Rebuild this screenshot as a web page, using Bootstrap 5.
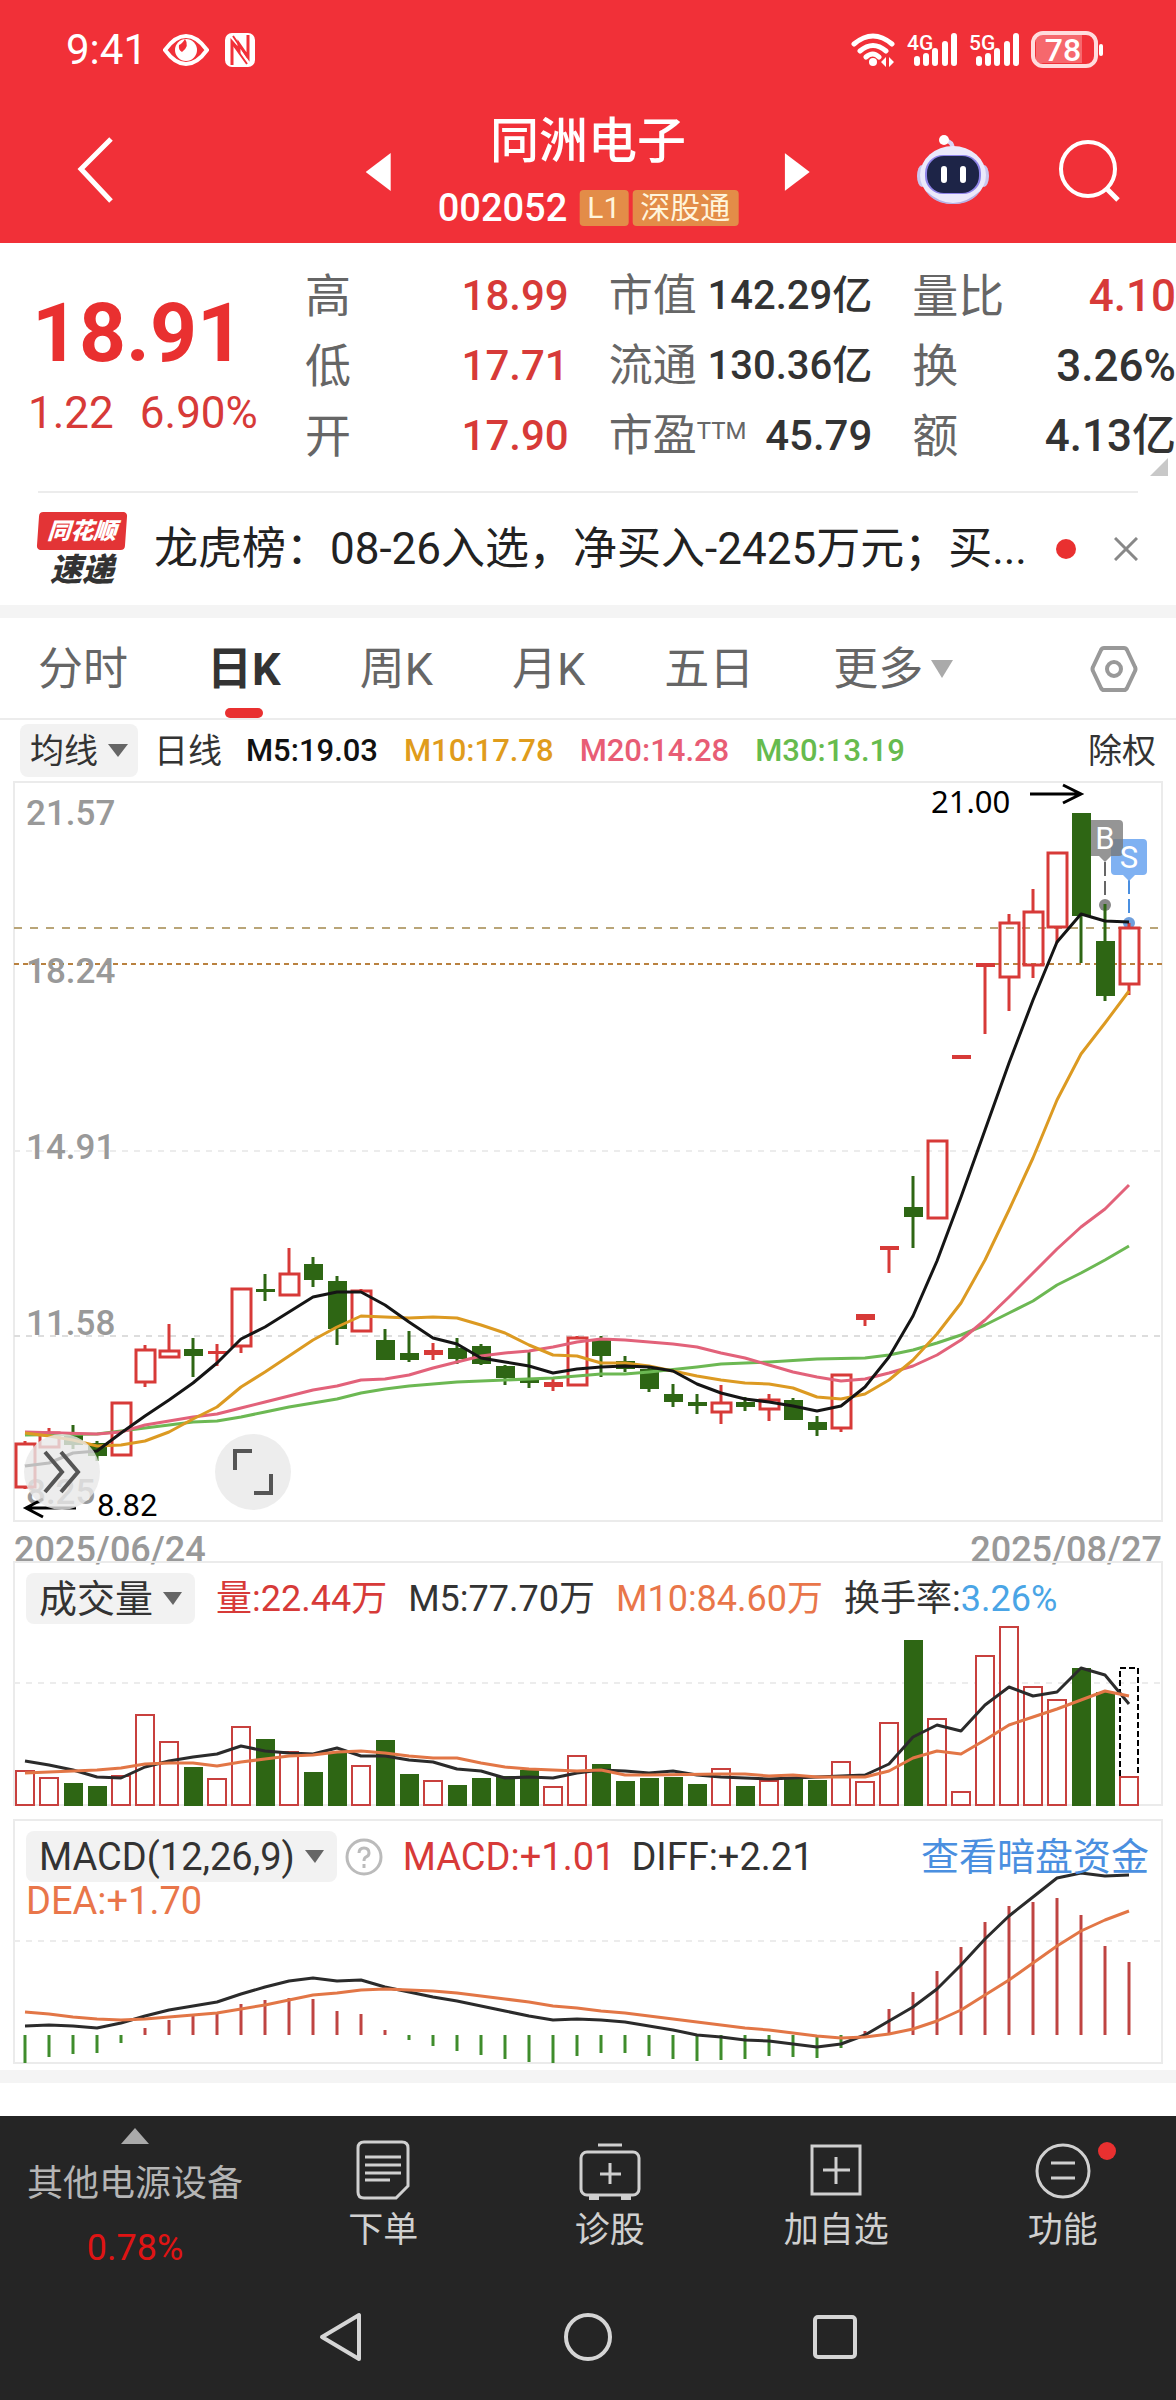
<!DOCTYPE html>
<html lang="zh-CN">
<head>
<meta charset="utf-8">
<meta name="viewport" content="width=device-width, initial-scale=1">
<title>同洲电子 002052</title>
<link rel="stylesheet" href="https://cdn.jsdelivr.net/npm/bootstrap@5.3.0/dist/css/bootstrap.min.css">
<style>
:root{--up:#d73a38;--ink:#333;--soft:#666;--axis:#999;--edge:#ebebeb}
body{font-family:Roboto,"Noto Sans CJK SC",sans-serif;color:var(--ink);background:#fff;font-size:44px;line-height:1}
button,a{font:inherit;line-height:inherit;color:inherit;text-decoration:none}
button{border:0;background:none;padding:0}
svg{display:block;flex:none}
.c-up{color:var(--up)}.c-dark{color:#222}
.topbar{background:#f13038;color:#fff}
.status{height:100px;padding:0 72px 0 66px}
.clock{font-size:42px}
.titlebar{height:143px;padding:0 56px 4px 76px}
.name-pad{padding:0 46px}
.title{font-size:49px;font-weight:500;height:72px;padding-bottom:22px}
.code{font-size:38px;font-weight:500}
.tag{background:#e38c48;border-radius:4px;font-size:30px;height:36px;padding:0 8px;color:#fff5dc}
.quote{height:248px}
.price-pane{width:305px;padding:46px 0 0 28px}
.price{font-size:82px;font-weight:700;line-height:88px;color:#e93030;padding-left:4px}
.delta{font-size:44px;line-height:60px;padding-top:6px;gap:26px}
.stats{gap:40px;padding-top:18px}
.stat{height:70px}
.stat .k{color:var(--soft)}
.wide-k .k{font-size:46px}
.stat .v{font-weight:500;font-size:42px}
.stat .v.cn{font-size:40px}
.wide-v .stat .v{font-size:44px}
.ttm{font-size:24px;align-self:flex-start;padding-top:18px;color:var(--soft)}
.corner{right:8px;bottom:15px}
.rule{border-top:2px solid #ececec;margin:0 38px}
.news{height:112px;padding:0 38px;gap:28px}
.news-end{gap:38px}
.logo-box{background:#e33436;border-radius:4px;transform:skewX(-4deg);width:88px;height:38px;color:#fff;font-size:23px;font-weight:900;font-style:italic}
.logo-sub{font-size:32px;font-weight:900;font-style:italic;height:32px}
.band{height:13px;background:#f4f4f4}
.tabs{height:102px;padding:2px 38px 0;gap:79px;color:var(--soft);border-bottom:2px solid #ececec;font-size:45px}
.tabs a.on{color:var(--ink);font-weight:700}
.tabs a{height:100%}
.tabs .on::after{content:"";position:absolute;bottom:0;left:50%;margin-left:-19px;width:38px;height:10px;border-radius:5px;background:#e93030}
.ma{height:61px;padding:0 20px;font-size:34px}
.pick{background:#f2f2f2;border-radius:8px;color:var(--ink)}
.ma .pick{height:53px;padding:0 10px;gap:10px}
.ma .avg{font-size:31px;font-weight:500;margin-right:26px}
.chart-wrap svg.plot,.sub svg.plot{width:100%;height:auto;overflow:visible}
.round{width:76px;height:76px;border-radius:50%;background:rgba(232,232,232,.8);bottom:12px}
.r1{left:24px}.r2{left:215px}
.dates{height:39px;padding:0 14px;color:var(--axis);font-size:36px;font-weight:500;line-height:56px}
.sub .legend-row{left:26px;right:27px;top:12px;font-size:38px}
.sub .pick{height:51px;padding:0 13px;gap:10px}
.legend-row.vol-row{font-size:36px;gap:21px}
.vol-row .pick{font-size:38px}
.gap-strip{height:33px}
.dock{background:#252525;color:#d0d0d0;font-size:35px}
.dock-main{height:158px}
.dock-main .sector{width:270px;color:#b5b5b5;font-size:36px}
.sector .nm{padding-top:22px}
.dock-main .act{padding-top:24px;gap:13px}
.sysnav{height:126px;gap:200px}
</style>
</head>
<body>
<header class="topbar">
  <div class="status d-flex align-items-center justify-content-between">
    <div class="d-flex align-items-center gap-3">
      <span class="clock">9:41</span>
      <svg width="46" height="34" viewBox="0 0 46 34"><path d="M2 17Q12 3 23 3T44 17Q34 31 23 31T2 17Z" fill="none" stroke="#fff" stroke-width="4"/><circle cx="23" cy="17" r="11" fill="#fff"/><path d="M22 6q5 7-3 13-4-2-3-7 3-1 6-6" fill="#f13038"/></svg>
      <svg width="30" height="34" viewBox="0 0 30 34"><rect width="30" height="34" rx="7" fill="#fff"/><path d="M7 32V9l7 8v-6l9 13V2" fill="none" stroke="#f13038" stroke-width="3"/><path d="M8 3l15 22M7 10l15 21" stroke="#f13038" stroke-width="2"/></svg>
    </div>
    <svg width="254" height="40" viewBox="851 30 254 40" font-family="Roboto,sans-serif" fill="#fff">
      <g fill="none" stroke="#fff" stroke-width="5" stroke-linecap="round"><path d="M855 44q19-16 38 0M861 51q13-11 26 0M867 57q7-6 13 0"/></g>
      <circle cx="874" cy="62" r="4"/><path d="M882 62l5-5v10zM895 62l-5-5v10z"/>
      <text x="908" y="50" font-size="21" font-weight="500">4G</text>
      <text x="970" y="50" font-size="21" font-weight="500">5G</text>
      <g stroke="#fff" stroke-width="6" stroke-linecap="round"><path d="M918 59v4M927 56v7M936 51v12M946 44v19M955 36v27M980 59v4M989 56v7M998 51v12M1008 44v19M1017 36v27"/></g>
      <path d="M1037 35h46v28h-46z" fill="#f6686d"/>
      <rect x="1034" y="33" width="63" height="33" rx="10" fill="none" stroke="#ffdcdd" stroke-width="4"/><path d="M1102 46v8" stroke="#fff" stroke-width="4" stroke-linecap="round"/>
      <text x="1064" y="61" font-size="32" font-weight="500" text-anchor="middle">78</text>
    </svg>
  </div>
  <div class="titlebar position-relative d-flex justify-content-between align-items-center">
    <a href="#" aria-label="返回"><svg width="40" height="68" viewBox="0 0 40 68"><path d="M35 3L5 33l30 32" fill="none" stroke="#fff" stroke-width="5"/></svg></a>
    <div class="position-absolute top-0 start-50 translate-middle-x h-100 d-flex align-items-center">
      <button aria-label="上一只"><svg width="26" height="38" viewBox="0 0 26 38"><path d="M0 19L25 0v38z" fill="#fff"/></svg></button>
      <div class="name-pad d-flex flex-column align-items-center text-nowrap">
        <div class="title d-flex align-items-center">同洲电子</div>
        <div class="d-flex align-items-center gap-1">
          <span class="code me-2">002052</span><span class="tag d-flex align-items-center">L1</span><span class="tag d-flex align-items-center">深股通</span>
        </div>
      </div>
      <button aria-label="下一只"><svg width="26" height="38" viewBox="0 0 26 38"><path d="M25 19L0 0v38z" fill="#fff"/></svg></button>
    </div>
    <div class="d-flex align-items-center gap-5">
      <button class="me-3 pe-1" aria-label="助手"><svg width="74" height="72" viewBox="0 0 74 72"><path d="M37 16q0-9-9-10" fill="none" stroke="#d9d3f5" stroke-width="4"/><circle cx="28" cy="6" r="5" fill="#fff"/><ellipse cx="6" cy="42" rx="5" ry="11" fill="#c9c6ee"/><ellipse cx="68" cy="42" rx="5" ry="11" fill="#c9c6ee"/><ellipse cx="37" cy="41" rx="33" ry="29" fill="#ebe9fb"/><path d="M10 57q27 24 54 0-8 13-27 13T10 57" fill="#b6b2e6"/><rect x="9" y="21" width="56" height="39" rx="18" fill="#8f84e8"/><rect x="11" y="22" width="52" height="37" rx="17" fill="#1d2447"/><path d="M28 35v11M47 35v11" stroke="#fff" stroke-width="6" stroke-linecap="round"/></svg></button>
      <button aria-label="搜索"><svg width="62" height="64" viewBox="0 0 62 64"><circle cx="30" cy="31" r="27" fill="none" stroke="#fff" stroke-width="4"/><path d="M48 50l12 12" stroke="#fff" stroke-width="5"/></svg></button>
    </div>
  </div>
</header>

<section class="quote d-flex position-relative">
  <div class="price-pane flex-shrink-0">
    <div class="price">18.91</div>
    <div class="delta c-up d-flex"><span>1.22</span><span>6.90%</span></div>
  </div>
  <div class="stats d-flex flex-grow-1 text-nowrap">
    <div class="flex-fill w-100 wide-k">
      <div class="stat d-flex align-items-center justify-content-between"><span class="k">高</span><span class="v c-up">18.99</span></div>
      <div class="stat d-flex align-items-center justify-content-between"><span class="k">低</span><span class="v c-up">17.71</span></div>
      <div class="stat d-flex align-items-center justify-content-between"><span class="k">开</span><span class="v c-up">17.90</span></div>
    </div>
    <div class="flex-fill w-100">
      <div class="stat d-flex align-items-center justify-content-between"><span class="k">市值</span><span class="v cn">142.29亿</span></div>
      <div class="stat d-flex align-items-center justify-content-between"><span class="k">流通</span><span class="v cn">130.36亿</span></div>
      <div class="stat d-flex align-items-center"><span class="k">市盈</span><span class="ttm">TTM</span><span class="v ms-auto">45.79</span></div>
    </div>
    <div class="flex-fill w-100 wide-k wide-v">
      <div class="stat d-flex align-items-center justify-content-between"><span class="k">量比</span><span class="v c-up">4.10</span></div>
      <div class="stat d-flex align-items-center justify-content-between"><span class="k">换</span><span class="v">3.26%</span></div>
      <div class="stat d-flex align-items-center justify-content-between"><span class="k">额</span><span class="v">4.13亿</span></div>
    </div>
  </div>
  <svg class="corner position-absolute" width="18" height="18"><path d="M18 0v18H0z" fill="#c8c8c8"/></svg>
</section>
<div class="rule"></div>
<section class="news d-flex align-items-center">
  <div class="flex-shrink-0 d-flex flex-column align-items-center gap-1">
    <span class="logo-box d-flex align-items-center justify-content-center">同花顺</span>
    <span class="logo-sub">速递</span>
  </div>
  <a href="#" class="text-nowrap c-dark">龙虎榜：08-26入选，净买入-2425万元；买...</a>
  <div class="news-end ms-auto d-flex align-items-center">
    <svg width="20" height="20"><circle cx="10" cy="10" r="10" fill="#e93030"/></svg>
    <button aria-label="关闭"><svg width="24" height="24" viewBox="0 0 24 24"><path d="M1 1l22 22M23 1L1 23" stroke="#888" stroke-width="3"/></svg></button>
  </div>
</section>
<div class="band"></div>

<nav class="tabs d-flex align-items-center text-nowrap">
  <a href="#" class="d-flex align-items-center">分时</a>
  <a href="#" class="on position-relative d-flex align-items-center">日K</a>
  <a href="#" class="d-flex align-items-center">周K</a>
  <a href="#" class="d-flex align-items-center">月K</a>
  <a href="#" class="d-flex align-items-center">五日</a>
  <a href="#" class="d-flex align-items-center gap-2">更多<svg width="22" height="18"><path d="M0 0h22L11 18z" fill="#aaa"/></svg></a>
  <button class="ms-auto" aria-label="设置"><svg width="48" height="48" viewBox="0 0 48 48" fill="none" stroke="#999" stroke-width="4"><path d="M14 3h20q2 0 3 2l8 17q1 2 0 4l-8 17q-1 2-3 2H14q-2 0-3-2L3 26q-1-2 0-4l8-17q1-2 3-2z"/><circle cx="24" cy="24" r="7"/></svg></button>
</nav>

<div class="ma d-flex align-items-center text-nowrap">
  <button class="pick d-flex align-items-center">均线<svg width="20" height="13"><path d="M0 0h20L10 13z" fill="#666"/></svg></button>
  <span class="ms-3 me-4">日线</span>
  <span class="avg" style="color:#111">M5:19.03</span>
  <span class="avg" style="color:#e09c1c">M10:17.78</span>
  <span class="avg" style="color:#e85d75">M20:14.28</span>
  <span class="avg" style="color:#66bb4e">M30:13.19</span>
  <span class="ms-auto">除权</span>
</div>

<section class="chart-wrap position-relative">
  <svg class="plot" id="kline" viewBox="0 781 1176 741" font-family="Roboto,sans-serif"></svg>
  <button class="round r1 position-absolute d-flex align-items-center justify-content-center" aria-label="展开"><svg width="38" height="44" viewBox="0 0 38 44"><path d="M2 2l17 20L2 42M18 2l17 20-17 20" fill="none" stroke="#555" stroke-width="4"/></svg></button>
  <button class="round r2 position-absolute d-flex align-items-center justify-content-center" aria-label="全屏"><svg width="40" height="46" viewBox="0 0 40 46"><path d="M2 21V2h17M21 44h17V25" fill="none" stroke="#555" stroke-width="4"/></svg></button>
</section>
<div class="dates d-flex justify-content-between"><span>2025/06/24</span><span>2025/08/27</span></div>

<section class="sub position-relative">
  <svg class="plot" id="vol" viewBox="0 1561 1176 258"></svg>
  <div class="legend-row vol-row position-absolute d-flex align-items-center text-nowrap">
    <button class="pick d-flex align-items-center">成交量<svg width="19" height="13"><path d="M0 0h19L10 13z" fill="#666"/></svg></button>
    <span class="c-up">量:22.44万</span>
    <span>M5:77.70万</span>
    <span style="color:#e9764a">M10:84.60万</span>
    <span>换手率:<span style="color:#4aa5e6">3.26%</span></span>
  </div>
</section>
<section class="sub position-relative">
  <svg class="plot" id="macd" viewBox="0 1819 1176 251"></svg>
  <div class="legend-row position-absolute">
    <div class="d-flex align-items-center text-nowrap">
      <button class="pick d-flex align-items-center">MACD(12,26,9)<svg width="19" height="13"><path d="M0 0h19L10 13z" fill="#666"/></svg></button>
      <svg class="ms-2" width="38" height="38" viewBox="0 0 38 38" fill="none" stroke="#bbb" stroke-width="3"><circle cx="19" cy="19" r="17"/><path d="M14 15q0-5 5-5t5 5q0 3-3 4-2 1-2 4M19 26v4"/></svg>
      <span class="c-up mx-3 ps-1">MACD:+1.01</span>
      <span>DIFF:+2.21</span>
      <a href="#" class="ms-auto" style="color:#4a8fe0">查看暗盘资金</a>
    </div>
    <div style="color:#e9764a">DEA:+1.70</div>
  </div>
</section>
<div class="band"></div>
<div class="gap-strip"></div>

<footer class="dock">
  <div class="dock-main d-flex">
    <a href="#" class="sector flex-shrink-0 d-flex flex-column align-items-center pt-2">
      <svg class="mt-1" width="28" height="16"><path d="M14 0l14 16H0z" fill="#aaa"/></svg>
      <span class="nm">其他电源设备</span><span class="pt-4 mt-1" style="color:#df1414">0.78%</span>
    </a>
    <a href="#" class="act flex-fill w-100 d-flex flex-column align-items-center"><svg width="54" height="60" viewBox="0 0 54 60" fill="none" stroke="#d0d0d0" stroke-width="3"><path d="M8 2h38q6 0 6 6v38L40 58H8q-6 0-6-6V8q0-6 6-6z"/><path d="M9 17h36M9 25h36M9 33h36M9 40h25"/></svg><span>下单</span></a>
    <a href="#" class="act flex-fill w-100 d-flex flex-column align-items-center"><svg width="62" height="60" viewBox="0 0 62 60" fill="none" stroke="#d0d0d0" stroke-width="3"><rect x="2" y="12" width="58" height="43" rx="6"/><path d="M19 5h24M31 23v21M21 34h21"/><path d="M10 58h10M42 58h10" stroke-width="4"/></svg><span>诊股</span></a>
    <a href="#" class="act flex-fill w-100 d-flex flex-column align-items-center"><svg width="54" height="60" viewBox="0 0 54 60" fill="none" stroke="#d0d0d0" stroke-width="3"><path d="M3 6h48v48H3zM27 17v27M14 30h27"/></svg><span>加自选</span></a>
    <a href="#" class="act flex-fill w-100 d-flex flex-column align-items-center"><svg width="108" height="60" viewBox="0 0 108 60" fill="none" stroke="#d0d0d0" stroke-width="3"><circle cx="54" cy="31" r="26"/><path d="M42 23h24M42 38h24"/><circle cx="98" cy="11" r="9" fill="#e93030" stroke="none"/></svg><span>功能</span></a>
  </div>
  <div class="sysnav d-flex align-items-center justify-content-center">
    <button aria-label="后退"><svg width="44" height="50" viewBox="0 0 44 50"><path d="M40 3v44L3 25z" fill="none" stroke="#d5d5d5" stroke-width="4" stroke-linejoin="round"/></svg></button>
    <button aria-label="主页"><svg width="50" height="50"><circle cx="25" cy="25" r="22" fill="none" stroke="#d5d5d5" stroke-width="4"/></svg></button>
    <button aria-label="最近任务"><svg width="44" height="46"><rect x="2" y="3" width="40" height="40" rx="3" fill="none" stroke="#d5d5d5" stroke-width="4"/></svg></button>
  </div>
</footer>
<script src="https://cdn.jsdelivr.net/npm/bootstrap@5.3.0/dist/js/bootstrap.bundle.min.js"></script>
<script>
const X = i => 25 + 24 * i, RED = '#d73a38', GREEN = '#2e6614';
// one line through daily values; a null is a day without its own vertex
const line = (ys, c, w = 3) => `<polyline fill="none" stroke="${c}" stroke-width="${w}" stroke-linejoin="round" points="${ys.map((y, i) => y == null ? '' : X(i) + ',' + y).join(' ')}"/>`;
const frame = (t, b) => `<rect x="14" y="${t}" width="1148" height="${b - t}" fill="none" stroke="#ebebeb" stroke-width="2"/>`;
const dash = (y, c, d) => `<path d="M14 ${y}H1162" stroke="${c}" stroke-width="2" stroke-dasharray="${d}"/>`;
// colour, body top, body bottom, high, low
const K = [['r',1444,1487,1441,1489],['r',1433,1447,1428,1448],['g',1433,1445,1425,1449],['g',1443,1456,1441,1461],['r',1403,1455,1403,1455],['r',1350,1382,1345,1387],['r',1351,1357,1324,1357],['g',1349,1356,1338,1377],['f',1351,1354,1344,1366],['r',1289,1346,1289,1353],['g',1289,1292,1274,1301],['r',1274,1295,1248,1295],['g',1264,1280,1257,1287],['g',1281,1329,1276,1345],['r',1291,1331,1289,1331],['g',1340,1360,1329,1360],['g',1353,1360,1331,1362],['f',1350,1355,1343,1360],['g',1348,1359,1338,1364],['g',1346,1364,1344,1365],['g',1366,1378,1365,1385],['g',1380,1383,1352,1388],['f',1382,1387,1378,1391],['r',1338,1385,1336,1385],['g',1339,1356,1336,1377],['g',1361,1369,1356,1372],['g',1369,1389,1365,1392],['g',1394,1402,1384,1407],['g',1402,1406,1394,1414],['r',1403,1412,1385,1424],['g',1402,1407,1397,1411],['r',1400,1409,1394,1421],['g',1400,1420,1398,1420],['g',1422,1430,1416,1436],['r',1375,1428,1375,1432],['f',1314,1320,1314,1326],['f',1246,1250,1247,1273],['g',1207,1217,1176,1248],['r',1141,1218,1141,1218],['f',1055,1059,1055,1059],['f',963,967,965,1034],['r',923,977,914,1011],['r',912,965,889,978],['r',853,927,853,943],['g',813,916,813,963],['g',941,996,904,1001],['r',928,984,923,995]];
const candle = ([t, a, b, h, l], i) => {
  const x = X(i), c = t === 'g' ? GREEN : RED, w = `<path d="M${x} ${h}V${a}M${x} ${b}V${l}" stroke="${c}" stroke-width="3"/>`;
  return w + (t === 'r' ? `<rect x="${x - 9}" y="${a}" width="19" height="${b - a}" fill="none" stroke="${c}" stroke-width="3"/>` : `<rect x="${x - 9}" y="${a}" width="19" height="${b - a}" fill="${c}"/>`);
};
const N = null;
const m5 = [1466,1463,1453,1451,1433,1416,1400,1383,1363,1339,1327,1312,1297,1292,1292,1305,1322,1338,1344,1358,1362,1366,1373,1369,1367,1366,1367,1371,1384,1393,1399,1402,1406,1411,1406,1387,1357,1316,1261,1197,1130,1063,1000,942,914,921,922];
const m10 = [1433,1436,1440,1446,1445,1441,1432,1419,1407,1387,1372,1356,1340,1327,1316,1317,1318,1317,1318,1325,1333,1345,1355,1356,1363,1363,1366,1371,1376,1380,1383,1384,1388,1397,1399,1394,1380,1360,1334,1303,1260,1210,1158,1100,1054,1023,991];
const m20 = [1432,N,N,1434,1432,1425,1421,1417,1414,1408,1402,1396,1390,1386,1380,1379,1375,1368,1362,1356,1353,1351,1347,1342,1339,1340,1342,1344,1347,1353,1358,1365,1372,1377,1381,1379,1373,1366,1355,1340,1320,1297,1273,1249,1227,1209,1185];
const m30 = [1435,N,N,1434,N,1428,1425,1422,1421,1417,1412,1407,1403,1399,1393,1389,1386,N,1382,N,1380,N,1378,1376,1374,1374,1372,N,1367,1364,N,1362,N,1359,N,1358,1355,1350,1343,1335,1325,1313,1301,1285,1273,1260,1246];
const axis = [['21.57',825],['18.24',983],['14.91',1159],['11.58',1335],['8.25',1504]];
kline.innerHTML = frame(782, 1521) + dash(1151, '#ececec', '6 6') + dash(1336, '#ddd', '6 6') + dash(928, '#b9a578', '8 8') + dash(964, '#b9813f', '5 4')
 + axis.map(([s, y]) => `<text x="26" y="${y}" font-size="35" font-weight="500" fill="#999">${s}</text>`).join('')
 + '<path d="M1105 862V900" stroke="#666" stroke-width="2" stroke-dasharray="14 5"/><path d="M1129 880V922" stroke="#4a8fe0" stroke-width="2" stroke-dasharray="14 5"/><circle cx="1105" cy="905" r="6" fill="#888"/><circle cx="1129" cy="923" r="6" fill="#6f9fdc"/>'
 + K.map(candle).join('') + line(m30, '#6cb853') + line(m20, '#e2627a') + line(m10, '#dc9a22') + line(m5, '#151515')
 + '<path d="M1115 839h28q4 0 4 4v28q0 4-4 4h-8l-6 6-6-6h-8q-4 0-4-4v-28q0-4 4-4z" fill="#7fb1f2"/><path d="M1091 820h28q4 0 4 4v28q0 4-4 4h-8l-6 6-6-6h-8z" fill="#777" fill-opacity=".78"/><text x="1105" y="849" font-size="31" fill="#fff" text-anchor="middle">B</text><text x="1129" y="868" font-size="31" fill="#fff" text-anchor="middle">S</text>'
 + '<text x="931" y="813" font-size="31" font-family="Noto Sans,sans-serif" fill="#000">21.00</text><path d="M1030 794h50M1063 785l18 9-18 9" fill="none" stroke="#000" stroke-width="3"/>'
 + '<text x="97" y="1516" font-size="31" fill="#000">8.82</text><path d="M76 1508H26M43 1499l-17 9 17 9" fill="none" stroke="#000" stroke-width="3"/>';

const vt = [1771,1778,1783,1786,1776,1715,1742,1767,1779,1727,1739,1752,1772,1752,1766,1740,1774,1781,1785,1778,1776,1770,1787,1756,1764,1781,1778,1777,1784,1769,1786,1781,1778,1780,1762,1782,1723,1640,1719,1792,1656,1627,1687,1700,1668,1692,1777];
const v5 = [1761,1765,1770,1777,1778,1767,1761,1757,1754,1746,1751,1753,1754,1748,1756,1756,1760,1762,1769,1771,1778,1777,1778,1773,1770,1771,1773,1771,1775,1777,1778,1779,1778,1777,1776,1775,1764,1737,1725,1731,1705,1687,1696,1692,1668,1675,1704];
const v10 = [1773,N,N,1770,1768,1764,1763,1763,1766,1762,1759,1756,1755,1752,1751,1753,1756,1758,1758,1763,1767,1769,1770,1771,1770,1775,1775,N,N,1774,1774,1776,1775,1777,1777,1777,1771,1758,1751,1754,1740,1725,1717,1709,1700,1691,1696];
// days that closed up are drawn hollow
const R = new Set([0,1,4,5,6,8,9,11,14,17,22,23,29,31,34,35,36,38,39,40,41,42,43,46]);
vol.innerHTML = frame(1562, 1805) + dash(1683, '#ececec', '6 6')
 + vt.map((y, i) => R.has(i) ? `<rect x="${X(i) - 9}" y="${y}" width="18" height="${1805 - y}" fill="#fff" stroke="#c8403e" stroke-width="2"/>` : `<rect x="${X(i) - 9}" y="${y}" width="19" height="${1806 - y}" fill="${GREEN}"/>`).join('')
 + '<path d="M1120 1776V1668H1138V1776" fill="none" stroke="#000" stroke-width="2" stroke-dasharray="6 3"/>' + line(v5, '#2b2b2b') + line(v10, '#e27646');

const mh = [2063,2057,2054,2053,2043,2028,2020,2016,2014,2004,2000,1998,1999,2011,2014,2030,2040,2046,2051,2055,2059,2062,2063,2056,2053,2053,2056,2059,2061,2060,2059,2056,2057,2058,2048,2031,2009,1992,1971,1947,1922,1906,1902,1898,1915,1946,1962];
const diff = [2026,2025,2026,2028,2023,2016,2010,2006,2002,1994,1987,1981,1978,1981,1980,1987,1992,1997,2001,2006,2011,2016,2020,2019,2020,2022,2026,2030,2035,2037,2040,2041,2044,2047,2044,2035,2021,2007,1989,1965,1939,1916,1897,1878,1873,1876,1875];
const dea = [2012,2014,2017,2019,2020,2019,2017,2015,2013,2009,2005,2000,1995,1993,1990,1989,1990,1991,1993,1996,1999,2002,2006,2008,2011,2013,2016,2019,2022,2025,2028,2030,2033,2036,2038,2037,2034,2029,2021,2010,1995,1980,1963,1946,1931,1920,1911];
macd.innerHTML = frame(1820, 2063) + dash(1941, '#ececec', '6 6')
 + mh.map((y, i) => `<path d="M${X(i)} 2035V${y}" stroke="${y > 2035 ? '#3f8c2c' : '#bf4442'}" stroke-width="3"/>`).join('') + line(diff, '#2b2b2b') + line(dea, '#e27646');
</script>
</body>
</html>
